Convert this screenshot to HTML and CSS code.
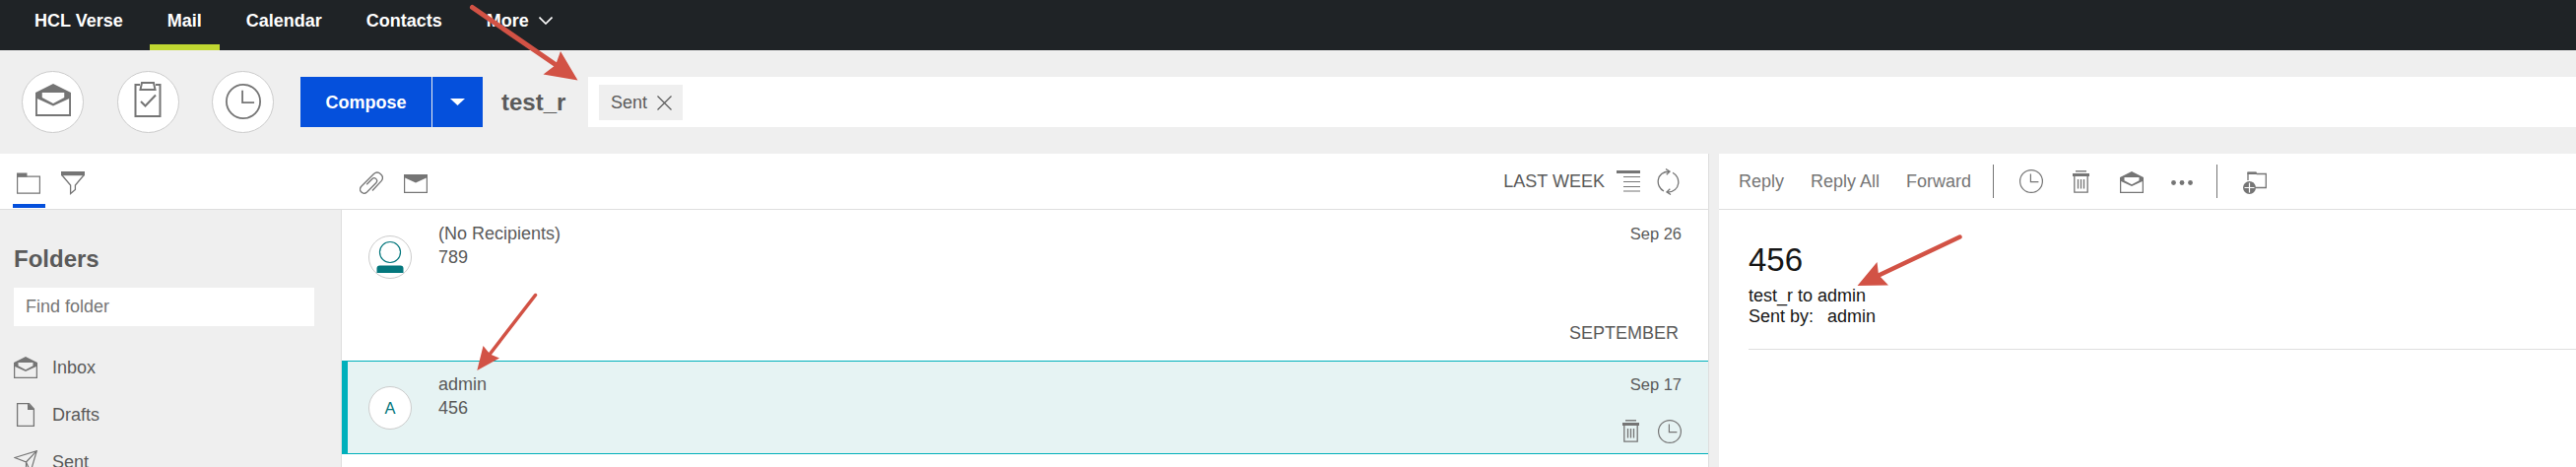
FILE: index.html
```html
<!DOCTYPE html>
<html lang="en">
<head>
  <meta charset="UTF-8" />
  <title>HCL Verse - Mail</title>
  <link rel="stylesheet" href="styles.css">
</head>
<body>
  <!-- shared icons -->
  <svg class="sprite" width="0" height="0">
    <symbol id="i-inbox" viewBox="0 0 24 22">
      <path d="M0.6 7v14.300h22.800V7" fill="none" stroke="currentColor" stroke-width="1.3"/>
      <path fill="currentColor" fill-rule="evenodd" d="M12 0L24 6v3.500L12 15 0 9.500V6zM4.500 6v3.300l7.500 4 7.500-4V6z"/>
    </symbol>
    <symbol id="i-clock" viewBox="0 0 24 24">
      <g fill="none" stroke="currentColor"><circle cx="12" cy="12" r="11.4" stroke-width="1.2"/><path d="M11.4 4.5v8.2h8" stroke-width="1.2"/></g>
    </symbol>
    <symbol id="i-trash" viewBox="0 0 17 23">
      <path d="M3 .8h11" stroke="currentColor" stroke-width="1.4"/>
      <path d="M0 3h17v3H0z" fill="currentColor"/>
      <path d="M1.8 6v16.2h13.4V6M5.5 9v9.5M8.5 9v9.5M11.5 9v9.5" fill="none" stroke="currentColor" stroke-width="1.3"/>
    </symbol>
  </svg>

  <nav>
    <a href="#">HCL Verse</a>
    <a href="#" class="active">Mail</a>
    <a href="#">Calendar</a>
    <a href="#">Contacts</a>
    <a href="#">More <svg class="chevron" width="14" height="8" viewBox="0 0 14 8"><path d="M.5.5L7 7 13.5.5" fill="none" stroke="#fff" stroke-width="1.6"/></svg></a>
  </nav>

  <header>
    <div class="views">
      <button class="round"><svg class="raised" width="36" height="33"><use href="#i-inbox"/></svg></button>
      <button class="round"><svg class="raised" width="28" height="36" viewBox="0 0 28 36">
        <g fill="none" stroke="#757575" stroke-width="2"><path d="M6 3H1.500v32h25V3H22"/><path d="M8 1h12l1.500 7h-15z"/><path d="M7 20l4.500 4.500L22 13.500"/></g>
      </svg></button>
      <button class="round"><svg width="36" height="36"><use href="#i-clock"/></svg></button>
    </div>
    <div class="compose">
      <button class="write">Compose</button>
      <button class="options"><svg width="15" height="7" viewBox="0 0 15 7"><path d="M0 0h15L7.5 7z" fill="#fff"/></svg></button>
    </div>
    <strong class="owner">test_r</strong>
    <div class="search">
      <span class="chip">Sent
        <svg width="15" height="15" viewBox="0 0 15 15"><path d="M.5.5l14 14M14.5.5l-14 14" stroke="#5a5a5a" stroke-width="1.2"/></svg>
      </span>
    </div>
  </header>

  <main>
    <section class="mailbox">
      <div class="bar">
        <div class="tabs">
          <a href="#" class="tab current"><svg width="24" height="22" viewBox="0 0 24 22"><path d="M.6 4.1h22.8v17H.6z" fill="none" stroke="#757575" stroke-width="1.2"/><path d="M0 .5h10.500v4H0z" fill="#757575"/></svg></a>
          <a href="#" class="tab"><svg width="24" height="24" viewBox="0 0 24 24"><path d="M.7 3.5L9.600 14v8.500l4.800-4V14L23.300 3.500" fill="none" stroke="#757575" stroke-width="1.3"/><path d="M0 0h24v4.200H0z" fill="#757575"/></svg></a>
        </div>
        <div class="filters">
          <svg width="24" height="24" viewBox="0 0 24 24"><path d="M7.2 13.2L12.700 7.700C15.500 5 19.500 8.800 16.700 11.700L7.500 21C3.500 24.500-1.500 19.500 1.500 15.500L14.500 2.500C19-1.500 26 4.500 22.200 9.700L13 19.500" fill="none" stroke="#757575" stroke-width="1.3"/></svg>
          <svg class="unread" width="24" height="19" viewBox="0 0 24 19"><path d="M.6 1v17.300h22.800V1" fill="none" stroke="#757575" stroke-width="1.2"/><path d="M0 0h24v3L12 8.500 0 3z" fill="#757575"/></svg>
        </div>
        <div class="sort">
          <span>LAST WEEK</span>
          <svg class="density" width="24" height="22" viewBox="0 0 24 22"><path d="M0 0h24v3H0z" fill="#757575"/><path d="M7 6.500h17M7 11.500h17M7 16.500h17M7 21h17" stroke="#757575" stroke-width="1.2"/></svg>
          <svg class="refresh" width="23" height="27" viewBox="0 0 23 27"><path d="M7 23C-1.500 18.500-1.500 4 12.500 3M9 .5l4 2.700-3.300 3M16 4.200c8.500 4.500 8.500 19-5.500 20M14 26.500l-4-2.700 3.300-3" fill="none" stroke="#757575" stroke-width="1.3"/></svg>
        </div>
      </div>

      <div class="panes">
        <aside>
          <h2>Folders</h2>
          <input type="text" placeholder="Find folder" />
          <ul>
            <li><svg width="24" height="22"><use href="#i-inbox"/></svg>Inbox</li>
            <li><svg width="24" height="24" viewBox="0 0 24 24"><path d="M3.6.6h11.900l4.900 5.500v17.300H3.600z" fill="none" stroke="#757575" stroke-width="1.3"/><path d="M14 0l7 7h-7z" fill="#757575"/></svg>Drafts</li>
            <li><svg width="24" height="24" viewBox="0 0 24 24"><path d="M1 7.500L23.300.7 17 22l-4.500-10zM12.500 12L23.300.7M12.500 12v9l2.700-3.500" fill="none" stroke="#757575" stroke-width="1.2"/></svg>Sent</li>
          </ul>
        </aside>

        <div class="messages">
          <div class="message">
            <span class="avatar"><svg width="28" height="34" viewBox="0 0 28 34"><circle cx="14" cy="12" r="10.500" fill="none" stroke="#04777d" stroke-width="1.2"/><path d="M.5 33v-4.500q0-3 3-3h21q3 0 3 3V33z" fill="#04777d"/></svg></span>
            <div class="summary">(No Recipients)<br>789</div>
            <span class="date">Sep 26</span>
          </div>
          <div class="month">SEPTEMBER</div>
          <div class="message selected">
            <span class="avatar">A</span>
            <div class="summary">admin<br>456</div>
            <div class="side">
              <span class="date">Sep 17</span>
              <div class="actions">
                <svg width="17" height="23"><use href="#i-trash"/></svg>
                <svg width="24" height="24"><use href="#i-clock"/></svg>
              </div>
            </div>
          </div>
        </div>
      </div>
    </section>

    <section class="reader">
      <div class="bar tools">
        <a href="#" class="reply">Reply</a>
        <a href="#" class="reply-all">Reply All</a>
        <a href="#" class="forward">Forward</a>
        <span class="divider"></span>
        <svg class="later" width="24" height="24"><use href="#i-clock"/></svg>
        <svg class="delete" width="17" height="23"><use href="#i-trash"/></svg>
        <svg class="mark" width="24" height="22"><use href="#i-inbox"/></svg>
        <svg class="dots" width="22" height="5" viewBox="0 0 22 5"><g fill="#757575"><circle cx="2.500" cy="2.500" r="2.400"/><circle cx="11" cy="2.500" r="2.400"/><circle cx="19.500" cy="2.500" r="2.400"/></g></svg>
        <span class="divider"></span>
        <svg class="move" width="24" height="23" viewBox="0 0 24 23"><path d="M5 9V1.500h8l1 1h9.300V16.500H13" fill="none" stroke="#757575" stroke-width="1.3"/><path d="M4.500.5h9V3h-9z" fill="#757575"/><circle cx="6.500" cy="16.500" r="6.500" fill="#757575"/><path d="M6.500 11.500v10M1.500 16.500h10" stroke="#fff" stroke-width="1.2"/></svg>
      </div>
      <article>
        <h1>456</h1>
        <p>test_r to admin</p>
        <p>Sent by:<span class="sender">admin</span></p>
      </article>
    </section>
  </main>

  <!-- callout arrows over the page -->
  <svg class="callouts" width="2615" height="474" viewBox="0 0 2615 474">
    <g stroke="#d25245" stroke-width="5" stroke-linecap="round">
      <path d="M479.500 7.500L566 67"/>
      <path d="M543.500 299.500L496 361" stroke-width="3.500"/>
      <path d="M1989.500 240.500L1906 280" stroke-width="4.500"/>
    </g>
    <g fill="#d25245">
      <path d="M586.500 81.500L569 52l-5 14-12.500 9.500z"/>
      <path d="M484.300 376L490.500 351l7 8.500 9.500 4z"/>
      <path d="M1885.500 290l20-24 1.500 13 10 10.500z"/>
    </g>
  </svg>
</body>
</html>
```
FILE: styles.css
```css
* {
  box-sizing: border-box;
}

body {
  font-family: "Liberation Sans", Arial, sans-serif;
  font-size: 18px;
  line-height: 24px;
  background-color: #efefef;
  color: #5a5a5a;
  margin: 0;
  height: 474px;
  overflow: hidden;
}

a {
  color: inherit;
  text-decoration: none;
}

svg {
  display: block;
  flex: none;
  color: #757575;
}

button {
  font: inherit;
  border: none;
  padding: 0;
  display: flex;
  align-items: center;
  justify-content: center;
}

.sprite {
  position: absolute;
}

nav {
  display: flex;
  gap: 9px;
  height: 51px;
  padding-left: 17px;
  background-color: #1f2326;
  color: #fff;
  font-weight: bold;
}

nav a {
  display: flex;
  gap: 10px;
  padding: 9px 18px 0;
}

nav a.active {
  border-bottom: 6px solid #c0d731;
}

.chevron {
  margin-top: 8px;
}

header {
  display: flex;
  align-items: center;
  height: 105px;
  padding-left: 22px;
}

.views {
  display: flex;
  gap: 33.5px;
}

.round {
  width: 63px;
  height: 63px;
  padding-bottom: 1px;
  border: 1px solid #ccc;
  border-radius: 50%;
  background-color: #fff;
}

.raised {
  margin-bottom: 4px;
}

.compose {
  display: flex;
  gap: 1px;
  height: 51px;
  margin-left: 27px;
}

.compose button {
  background-color: #0550dc;
  color: #fff;
  font-weight: bold;
}

.write {
  width: 133px;
}

.options {
  width: 51px;
}

.owner {
  width: 88px;
  margin-left: 19px;
  font-size: 24px;
}

.search {
  flex: 1;
  display: flex;
  height: 51px;
  padding: 8px 11px;
  background-color: #fff;
}

.chip {
  display: flex;
  align-items: center;
  gap: 10px;
  height: 36px;
  padding: 0 11px 0 12px;
  background-color: #efefef;
}

main {
  display: flex;
  gap: 10px;
  height: 318px;
}

.mailbox {
  display: flex;
  flex-direction: column;
  width: 1735px;
  background-color: #fff;
  border-right: 1px solid #dedede;
}

.bar {
  display: flex;
  align-items: center;
  height: 57px;
  border-bottom: 1px solid #dedede;
}

.tabs {
  display: flex;
  gap: 12px;
  width: 365px;
  height: 56px;
  padding-left: 13px;
}

.tab {
  width: 33px;
  height: 55px;
  padding: 18px 4px 0;
}

.tab.current {
  padding-top: 19px;
  border-bottom: 4px solid #0550dc;
}

.filters {
  display: flex;
  gap: 21px;
  padding-top: 3px;
}

.unread {
  margin-top: 3px;
}

.sort {
  display: flex;
  align-items: center;
  margin-left: auto;
  padding-right: 29px;
}

.sort span {
  margin-right: 12px;
}

.density {
  margin-top: -1px;
}

.refresh {
  margin-left: 17px;
}

.panes {
  display: flex;
  flex: 1;
}

aside {
  width: 347px;
  padding: 38px 27px 0 14px;
  background-color: #efefef;
  border-right: 1px solid #dedede;
}

h2 {
  margin: 0 0 17px;
  font-size: 24px;
  line-height: 24px;
}

input {
  display: block;
  width: 305px;
  height: 39px;
  padding: 0 12px;
  border: none;
  font: inherit;
  background-color: #fff;
}

ul {
  list-style: none;
  margin: 18px 0 0;
  padding: 0;
}

li {
  display: flex;
  align-items: center;
  gap: 15px;
  height: 48px;
}

.messages {
  flex: 1;
}

.message {
  display: flex;
  height: 95px;
  padding: 12px 27px 0;
}

.avatar {
  display: flex;
  align-items: center;
  justify-content: center;
  width: 44px;
  height: 44px;
  margin: 14px 27px 0 0;
  border: 1px solid #ccc;
  border-radius: 50%;
  background-color: #fff;
  color: #04777d;
  font-size: 16.5px;
}

.summary {
  flex: 1;
}

.date {
  font-size: 16.5px;
}

.month {
  height: 58px;
  padding: 18px 30px 0;
  text-align: right;
}

.selected {
  padding-left: 21px;
  padding-top: 11px;
  background-color: #e6f3f3;
  border: solid #00b0bb;
  border-width: 1px 0 1px 6px;
}

.actions {
  display: flex;
  gap: 19px;
  margin-top: 24px;
}

.side {
  display: flex;
  flex-direction: column;
  align-items: flex-end;
}

.reader {
  flex: 1;
  background-color: #fff;
}

.tools {
  padding-left: 20px;
  color: #757575;
}

.reply {
  width: 73px;
}

.reply-all {
  width: 97px;
}

.forward {
  width: 88px;
}

.divider {
  width: 1px;
  height: 34px;
  background-color: #757575;
}

.later {
  margin: 0 30px 0 26px;
}

.mark {
  margin: 2px 28px 0 31px;
}

.dots {
  margin: 2px 24px 0 0;
}

.move {
  margin: 3px 0 0 26px;
}

article {
  height: 142px;
  margin-left: 30px;
  padding-top: 32px;
  border-bottom: 1px solid #dedede;
  color: #161616;
}

h1 {
  margin: 0 0 7px;
  font-size: 33px;
  font-weight: normal;
  line-height: 38px;
}

p {
  margin: 0;
  line-height: 21px;
}

.sender {
  margin-left: 14px;
}

.callouts {
  position: absolute;
  top: 0;
  left: 0;
  pointer-events: none;
}
```
